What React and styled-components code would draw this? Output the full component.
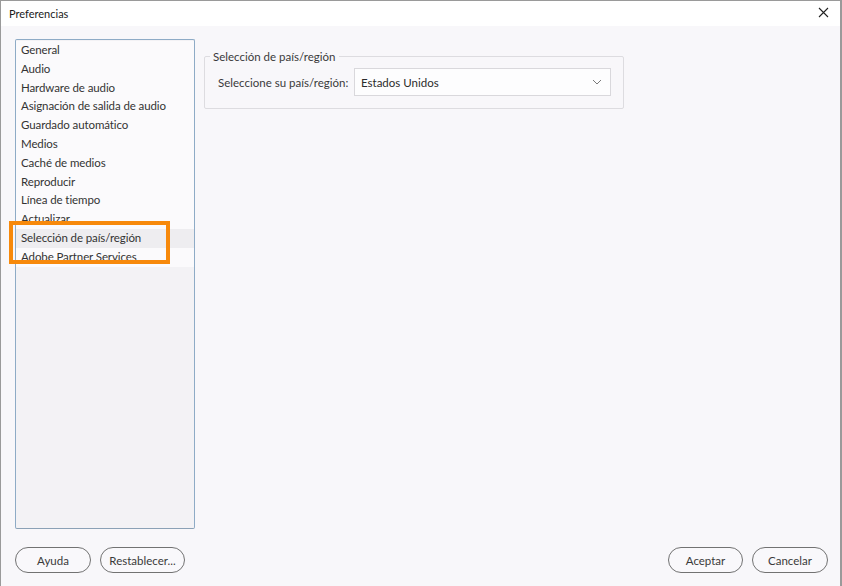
import React from 'react'
import styled, { createGlobalStyle } from 'styled-components'

const GlobalStyle = createGlobalStyle`
    html, body {
        margin: 0;
        padding: 0;
        background: #f8f7fa;
    }
    * {
        box-sizing: border-box;
    }
`

const sections = [
    'General',
    'Audio',
    'Hardware de audio',
    'Asignación de salida de audio',
    'Guardado automático',
    'Medios',
    'Caché de medios',
    'Reproducir',
    'Línea de tiempo',
    'Actualizar',
    'Selección de país/región',
    'Adobe Partner Services',
]

function App() {
    const selected = 'Selección de país/región'
    return (
        <>
            <GlobalStyle />
            <Window>
                <TitleBar>
                    <Title>Preferencias</Title>
                    <Close aria-label="Cerrar">
                        <svg width="11" height="11" viewBox="0 0 11 11">
                            <path d="M1 1 L10 10 M10 1 L1 10" stroke="#222" strokeWidth="1.1" fill="none" />
                        </svg>
                    </Close>
                </TitleBar>
                <Body>
                    <Content>
                        <SideWrap>
                            <List>
                                <Items>
                                    {sections.map((s) => (
                                        <Item key={s} $active={s === selected}>{s}</Item>
                                    ))}
                                </Items>
                            </List>
                            <Highlight />
                        </SideWrap>
                        <Panel>
                            <Group>
                                <Legend>Selección de país/región</Legend>
                                <Row>
                                    <Label>Seleccione su país/región:</Label>
                                    <Select>
                                        <span>Estados Unidos</span>
                                        <svg width="10" height="6" viewBox="0 0 10 6">
                                            <path d="M1 1 L5 5 L9 1" stroke="#7a7a7a" strokeWidth="1" fill="none" />
                                        </svg>
                                    </Select>
                                </Row>
                            </Group>
                        </Panel>
                    </Content>
                    <Footer>
                        <ButtonGroup>
                            <Button $w={76}>Ayuda</Button>
                            <Button $w={85}>Restablecer...</Button>
                        </ButtonGroup>
                        <ButtonGroup>
                            <Button $w={75}>Aceptar</Button>
                            <Button $w={76}>Cancelar</Button>
                        </ButtonGroup>
                    </Footer>
                </Body>
            </Window>
        </>
    )
}

export default App

const Window = styled.div`
    width: 842px;
    height: 586px;
    border: 1px solid #9a9a9a;
    border-bottom: none;
    border-right-width: 2px;
    background: #f8f7fa;
    display: flex;
    flex-direction: column;
    font-family: Lato, "Open Sans", sans-serif;
    color: #2b2b2b;
    overflow: hidden;
`
const TitleBar = styled.div`
    height: 25px;
    background: #ffffff;
    display: flex;
    align-items: center;
    justify-content: space-between;
    padding: 0 8px 0 8px;
`
const Title = styled.div`
    font-size: 11px;
    color: #1a1a1a;
`
const Close = styled.div`
    display: flex;
    align-items: center;
    margin-right: 3px;
    margin-top: -2px;
`
const Body = styled.div`
    flex: 1;
    display: flex;
    flex-direction: column;
    padding: 13px 12px 13px 14px;
`
const Content = styled.div`
    display: flex;
    gap: 9px;
    height: 490px;
`
const SideWrap = styled.div`
    position: relative;
    width: 180px;
    flex-shrink: 0;
`
const List = styled.div`
    height: 100%;
    border: 1px solid #8eabc6;
    border-bottom-color: #8ba1b6;
    border-radius: 2px;
    background: #f3f2f5;
    padding-top: 1px;
`
const Items = styled.div`
    background: #fbfafc;
`
const Item = styled.div`
    height: 18.8px;
    line-height: 18.8px;
    padding-left: 5px;
    font-size: 11.5px;
    letter-spacing: -0.1px;
    color: #333333;
    white-space: nowrap;
    background: ${(p) => (p.$active ? '#eeedf0' : 'transparent')};
`
const Highlight = styled.div`
    position: absolute;
    left: -6px;
    top: 182px;
    width: 161px;
    height: 43px;
    border: 4px solid #f7890b;
    pointer-events: none;
`
const Panel = styled.div`
    flex: 1;
    padding-top: 11px;
`
const Group = styled.fieldset`
    width: 420px;
    margin: 0;
    padding: 5px 12px 12px 13px;
    border: 1px solid #dddce0;
    border-radius: 2px;
`
const Legend = styled.legend`
    font-size: 11.5px;
    color: #3a3a3a;
    padding: 0 3px 0 3px;
    margin-left: -8px;
`
const Row = styled.div`
    display: flex;
    align-items: center;
`
const Label = styled.div`
    font-size: 11.5px;
    color: #3a3a3a;
    width: 136px;
    white-space: nowrap;
`
const Select = styled.div`
    flex: 1;
    height: 28px;
    border: 1px solid #d9d8dc;
    background: #fdfdfe;
    display: flex;
    align-items: center;
    justify-content: space-between;
    padding: 0 8px 0 6px;
    font-size: 11.5px;
    color: #2b2b2b;
`
const Footer = styled.div`
    display: flex;
    justify-content: space-between;
    align-items: flex-end;
    margin-top: auto;
`
const ButtonGroup = styled.div`
    display: flex;
    gap: 9px;
`
const Button = styled.div`
    width: ${(p) => p.$w}px;
    height: 26px;
    border: 1px solid #727272;
    border-radius: 13px;
    display: flex;
    align-items: center;
    justify-content: center;
    font-size: 11.5px;
    color: #3a3a3a;
    background: #f9f8fb;
`
